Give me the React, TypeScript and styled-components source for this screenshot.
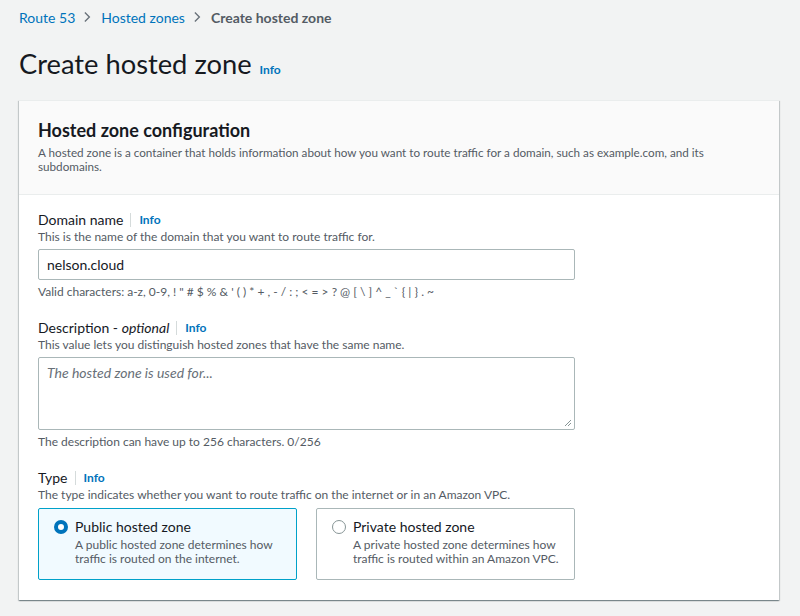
import styled, { createGlobalStyle } from "styled-components";

const GlobalStyle = createGlobalStyle`
  * { box-sizing: border-box; }
  body {
    margin: 0;
    background: #f2f3f3;
    font-family: Lato, "Open Sans", "Liberation Sans", sans-serif;
    color: #16191f;
  }
`;

type TileProps = { $selected?: boolean };

const Page = styled.div`
  width: 800px;
  height: 616px;
  padding: 8px 21px 0 19px;
  overflow: hidden;
`;

const Breadcrumbs = styled.nav`
  display: flex;
  align-items: center;
  gap: 6px;
  font-size: 14px;
  height: 18px;
`;

const Crumb = styled.a`
  color: #0073bb;
  text-decoration: none;
`;

const CurrentCrumb = styled.span`
  color: #545b64;
  font-weight: 700;
`;

const Chevron = styled.svg`
  width: 11px;
  height: 12px;
  color: #687078;
  margin: 0 2px 0 1px;
`;

const TitleRow = styled.div`
  display: flex;
  align-items: baseline;
  gap: 8px;
  margin-top: 20px;
`;

const Title = styled.h1`
  margin: 0;
  font-size: 27.3px;
  font-weight: 400;
  line-height: 36px;
`;

const InfoLink = styled.a`
  color: #0073bb;
  font-size: 12px;
  font-weight: 700;
  text-decoration: none;
`;

const Card = styled.section`
  margin-top: 18px;
  background: #ffffff;
  border-top: 1px solid #eaeded;
  box-shadow: 0 1px 1px 0 rgba(0, 28, 36, 0.3), 1px 1px 1px 0 rgba(0, 28, 36, 0.15),
    -1px 1px 1px 0 rgba(0, 28, 36, 0.15);
  width: 760px;
`;

const CardHeader = styled.header`
  background: #fafafa;
  border-bottom: 1px solid #eaeded;
  padding: 17px 19px 20px;
  height: 94px;
`;

const CardTitle = styled.h2`
  margin: 0;
  font-size: 18px;
  font-weight: 700;
  line-height: 24px;
`;

const Secondary = styled.p`
  margin: 0;
  font-size: 12px;
  line-height: 14px;
  color: #545b64;
`;

const HeaderNote = styled(Secondary)`
  margin-top: 3px;
  font-size: 11.7px;
`;

const CardBody = styled.div`
  padding: 15px 19px 20px;
  display: flex;
  flex-direction: column;
  gap: 19px;
`;

const Field = styled.div`
  display: flex;
  flex-direction: column;
  width: 537px;
`;

const LabelRow = styled.div`
  display: flex;
  align-items: center;
  font-size: 14px;
  line-height: 20px;
`;

const Label = styled.label`
  padding-right: 7px;
  border-right: 1px solid #d5dbdb;
  line-height: 14px;
  margin-right: 8px;
`;

const Optional = styled.i``;

const Input = styled.div`
  margin-top: 5px;
  height: 31px;
  border: 1px solid #aab7b8;
  border-radius: 2px;
  padding: 0 8px;
  display: flex;
  align-items: center;
  font-size: 14px;
  background: #fff;
`;

const TextArea = styled.div`
  margin-top: 5px;
  height: 73px;
  border: 1px solid #aab7b8;
  border-radius: 2px;
  padding: 6px 8px;
  font-size: 14px;
  font-style: italic;
  color: #687078;
  position: relative;
`;

const Grip = styled.svg`
  position: absolute;
  right: 2px;
  bottom: 2px;
  width: 8px;
  height: 8px;
`;

const Hint = styled(Secondary)`
  margin-top: 5px;
`;

const Tiles = styled.div`
  display: grid;
  grid-template-columns: 259px 259px;
  gap: 19px;
  margin-top: 6px;
`;

const Tile = styled.div<TileProps>`
  height: 72px;
  border: 1px solid ${(p) => (p.$selected ? "#00a1c9" : "#aab7b8")};
  background: ${(p) => (p.$selected ? "#f1faff" : "#fff")};
  border-radius: 2px;
  padding: 8px 6px 0 15px;
  display: flex;
  gap: 7px;
`;

const Radio = styled.span<TileProps>`
  flex: none;
  margin-top: 3px;
  width: 14px;
  height: 14px;
  border-radius: 50%;
  border: ${(p) => (p.$selected ? "4px solid #0073bb" : "1px solid #879596")};
  background: #fff;
`;

const TileText = styled.div`
  display: flex;
  flex-direction: column;
  max-width: 210px;
`;

const TileTitle = styled.span`
  font-size: 14px;
  line-height: 20px;
`;

const TypeNote = styled(Secondary)`
  margin-top: 1px;
`;

const InfoLabel = ({ children }: { children: React.ReactNode }) => (
  <LabelRow>
    <Label>{children}</Label>
    <InfoLink href="#">Info</InfoLink>
  </LabelRow>
);

const ChevronIcon = () => (
  <Chevron viewBox="0 0 11 16" fill="none" stroke="currentColor" strokeWidth="1.8">
    <path d="M2 2l6 6-6 6" />
  </Chevron>
);

export default function App() {
  return (
    <Page>
      <GlobalStyle />
      <Breadcrumbs>
        <Crumb href="#">Route 53</Crumb>
        <ChevronIcon />
        <Crumb href="#">Hosted zones</Crumb>
        <ChevronIcon />
        <CurrentCrumb>Create hosted zone</CurrentCrumb>
      </Breadcrumbs>

      <TitleRow>
        <Title>Create hosted zone</Title>
        <InfoLink href="#">Info</InfoLink>
      </TitleRow>

      <Card>
        <CardHeader>
          <CardTitle>Hosted zone configuration</CardTitle>
          <HeaderNote>
            A hosted zone is a container that holds information about how you want to route traffic for a
            domain, such as example.com, and its subdomains.
          </HeaderNote>
        </CardHeader>

        <CardBody>
          <Field>
            <InfoLabel>Domain name</InfoLabel>
            <Secondary>This is the name of the domain that you want to route traffic for.</Secondary>
            <Input>nelson.cloud</Input>
            <Hint>
              Valid characters: a-z, 0-9, ! " # $ % &amp; ' ( ) * + , - / : ; &lt; = &gt; ? @ [ \ ] ^ _ ` {"{"} |{" "}
              {"}"} . ~
            </Hint>
          </Field>

          <Field>
            <InfoLabel>
              Description - <Optional>optional</Optional>
            </InfoLabel>
            <Secondary>This value lets you distinguish hosted zones that have the same name.</Secondary>
            <TextArea>
              The hosted zone is used for...
              <Grip viewBox="0 0 8 8" stroke="#879596" strokeWidth="1">
                <path d="M1 7l6-6M4 7l3-3" />
              </Grip>
            </TextArea>
            <Hint>The description can have up to 256 characters. 0/256</Hint>
          </Field>

          <Field>
            <InfoLabel>Type</InfoLabel>
            <Secondary>
              The type indicates whether you want to route traffic on the internet or in an Amazon VPC.
            </Secondary>
            <Tiles>
              <Tile $selected>
                <Radio $selected />
                <TileText>
                  <TileTitle>Public hosted zone</TileTitle>
                  <TypeNote>
                    A public hosted zone determines how traffic is routed on the internet.
                  </TypeNote>
                </TileText>
              </Tile>
              <Tile>
                <Radio />
                <TileText>
                  <TileTitle>Private hosted zone</TileTitle>
                  <TypeNote>
                    A private hosted zone determines how traffic is routed within an Amazon VPC.
                  </TypeNote>
                </TileText>
              </Tile>
            </Tiles>
          </Field>
        </CardBody>
      </Card>
    </Page>
  );
}
